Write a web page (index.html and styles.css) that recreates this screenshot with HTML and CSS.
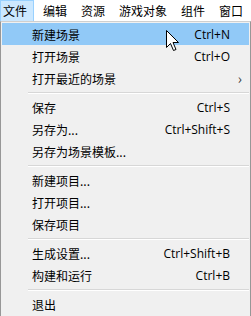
FILE: index.html
```html
<!DOCTYPE html>
<html>
  <head>
    <meta charset="UTF-8">
    <title>文件菜单</title>
    <link rel="stylesheet" href="styles.css">
  </head>
  <body>
    <div class="menubar">
      <span class="menubar-item active">文件</span>
      <span class="menubar-item">编辑</span>
      <span class="menubar-item">资源</span>
      <span class="menubar-item">游戏对象</span>
      <span class="menubar-item">组件</span>
      <span class="menubar-item">窗口</span>
    </div>
    <div class="dropdown">
      <div class="item hover"><span>新建场景</span><span class="key">Ctrl+N</span></div>
      <div class="item"><span>打开场景</span><span class="key">Ctrl+O</span></div>
      <div class="item"><span>打开最近的场景</span><span class="arrow">&rsaquo;</span></div>
      <div class="sep"></div>
      <div class="item"><span>保存</span><span class="key">Ctrl+S</span></div>
      <div class="item"><span>另存为...</span><span class="key">Ctrl+Shift+S</span></div>
      <div class="item"><span>另存为场景模板...</span></div>
      <div class="sep"></div>
      <div class="item"><span>新建项目...</span></div>
      <div class="item"><span>打开项目...</span></div>
      <div class="item"><span>保存项目</span></div>
      <div class="sep"></div>
      <div class="item"><span>生成设置...</span><span class="key">Ctrl+Shift+B</span></div>
      <div class="item"><span>构建和运行</span><span class="key">Ctrl+B</span></div>
      <div class="sep"></div>
      <div class="item"><span>退出</span></div>
    </div>
    <svg class="cursor" width="15" height="23" viewBox="0 0 15 23">
      <path d="M1.5 1.5 L1.5 18.5 L5.5 14.5 L8.5 21.5 L11 20.5 L8 13.5 L13.5 13.5 Z" fill="#fff" stroke="#000" stroke-width="1" stroke-linejoin="round"/>
    </svg>
  </body>
</html>
```

FILE: styles.css
```css
html, body {
  margin: 0;
  padding: 0;
  background: #f0f0f0;
  font-family: "Noto Sans CJK SC", "Noto Sans", sans-serif;
  font-size: 12px;
  color: #000;
}
body {
  width: 251px;
  height: 316px;
  position: relative;
  overflow: hidden;
}
.menubar {
  display: flex;
  gap: 4px;
  height: 21px;
  background: #fff;
}
.menubar-item {
  flex-shrink: 0;
  white-space: nowrap;
  padding: 0 4px;
  height: 20px;
  line-height: 19px;
  border: 1px solid transparent;
  border-bottom: none;
  box-sizing: border-box;
}
.menubar-item:first-child {
  padding: 0 6px 0 2px;
}
.menubar-item.active {
  background: #cce8ff;
  border-color: #99d1ff;
  height: 21px;
}
.dropdown {
  border: 1px solid #979797;
  border-top-color: #cfcfcf;
  padding: 1px;
  background: #f0f0f0;
  height: 295px;
}
.item {
  display: flex;
  align-items: center;
  height: 22px;
  padding: 0 19px 0 30px;
  white-space: nowrap;
}
.item span:first-child {
  flex: 1;
}
.item.hover {
  background: #91c9f7;
}
.key {
  font-family: "Open Sans", "Noto Sans", sans-serif;
  font-size: 12px;
}
.arrow {
  margin-right: -12px;
  font-size: 14px;
  color: #333;
}
.sep {
  height: 7px;
  margin-left: 26px;
  display: flex;
  flex-direction: column;
  justify-content: center;
}
.sep::before {
  content: "";
  height: 1px;
  background: #d7d7d7;
  border-bottom: 1px solid #fff;
}
.cursor {
  position: absolute;
  left: 165px;
  top: 29px;
}
```
